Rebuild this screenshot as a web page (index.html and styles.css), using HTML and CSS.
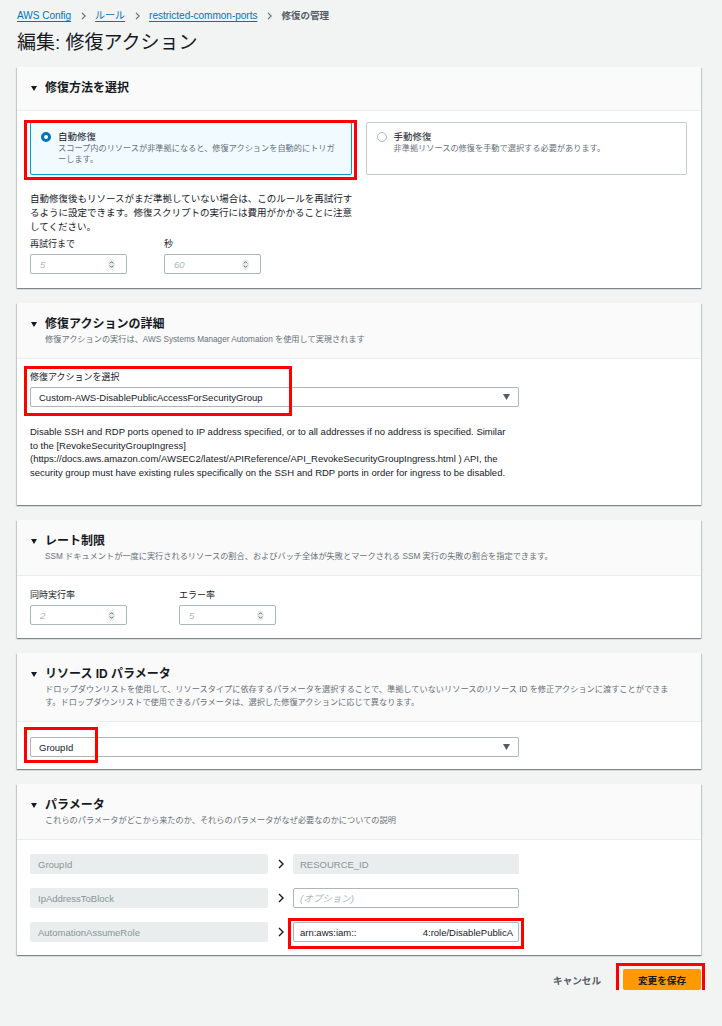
FILE: index.html
```html
<!DOCTYPE html>
<html lang="ja">
<head>
<meta charset="utf-8">
<title>編集: 修復アクション</title>
<link rel="stylesheet" href="styles.css">
</head>
<body>
<div class="page">
  <nav class="crumbs">
    <a class="crumb-link" href="#">AWS Config</a>
    <svg class="crumb-sep" width="5" height="8" viewBox="0 0 5 8"><path d="M1 0.8 L4.2 4 L1 7.2" fill="none" stroke="#687078" stroke-width="1.2"/></svg>
    <a class="crumb-link" href="#">ルール</a>
    <svg class="crumb-sep" width="5" height="8" viewBox="0 0 5 8"><path d="M1 0.8 L4.2 4 L1 7.2" fill="none" stroke="#687078" stroke-width="1.2"/></svg>
    <a class="crumb-link" href="#">restricted-common-ports</a>
    <svg class="crumb-sep" width="5" height="8" viewBox="0 0 5 8"><path d="M1 0.8 L4.2 4 L1 7.2" fill="none" stroke="#687078" stroke-width="1.2"/></svg>
    <span class="crumb-current">修復の管理</span>
  </nav>
  <h1 class="title">編集: 修復アクション</h1>

  <section class="panel panel-first">
    <header class="panel-head panel-head-plain">
      <h2 class="panel-title"><svg class="caret" width="6" height="5" viewBox="0 0 6 5"><polygon points="0,0 6,0 3,5" fill="#16191f"/></svg>修復方法を選択</h2>
    </header>
    <div class="panel-body body-method">
      <div class="choice-grid">
        <div class="choice is-selected">
          <span class="radio radio-on"></span>
          <div class="choice-text">
            <div class="choice-title">自動修復</div>
            <div class="choice-desc">スコープ内のリソースが非準拠になると、修復アクションを自動的にトリガーします。</div>
          </div>
          <span class="hl hl-card"></span>
        </div>
        <div class="choice">
          <span class="radio"></span>
          <div class="choice-text">
            <div class="choice-title">手動修復</div>
            <div class="choice-desc">非準拠リソースの修復を手動で選択する必要があります。</div>
          </div>
        </div>
      </div>
      <p class="note">自動修復後もリソースがまだ準拠していない場合は、このルールを再試行するように設定できます。修復スクリプトの実行には費用がかかることに注意してください。</p>
      <div class="field-row row-retry">
        <div class="field">
          <span class="label">再試行まで</span>
          <div class="num"><span>5</span><svg width="7" height="11" viewBox="0 0 7 11"><ellipse cx="3.5" cy="5.5" rx="3.5" ry="5.5" fill="#eaeded"/><path d="M1.8 4.4 L3.5 2.7 L5.2 4.4 M1.8 6.6 L3.5 8.3 L5.2 6.6" fill="none" stroke="#545b64" stroke-width="0.9"/></svg></div>
        </div>
        <div class="field">
          <span class="label">秒</span>
          <div class="num"><span>60</span><svg width="7" height="11" viewBox="0 0 7 11"><ellipse cx="3.5" cy="5.5" rx="3.5" ry="5.5" fill="#eaeded"/><path d="M1.8 4.4 L3.5 2.7 L5.2 4.4 M1.8 6.6 L3.5 8.3 L5.2 6.6" fill="none" stroke="#545b64" stroke-width="0.9"/></svg></div>
        </div>
      </div>
    </div>
  </section>

  <section class="panel">
    <header class="panel-head">
      <h2 class="panel-title"><svg class="caret" width="6" height="5" viewBox="0 0 6 5"><polygon points="0,0 6,0 3,5" fill="#16191f"/></svg>修復アクションの詳細</h2>
      <p class="panel-sub">修復アクションの実行は、AWS Systems Manager Automation を使用して実現されます</p>
    </header>
    <div class="panel-body body-action">
      <div class="field field-action">
        <span class="label">修復アクションを選択</span>
        <div class="select"><span>Custom-AWS-DisablePublicAccessForSecurityGroup</span><svg width="7" height="6" viewBox="0 0 7 6"><polygon points="0,0 7,0 3.5,6" fill="#545b64"/></svg></div>
        <span class="hl hl-action"></span>
      </div>
      <p class="desc">Disable SSH and RDP ports opened to IP address specified, or to all addresses if no address is specified. Similar<br>to the [RevokeSecurityGroupIngress]<br>(https://docs.aws.amazon.com/AWSEC2/latest/APIReference/API_RevokeSecurityGroupIngress.html ) API, the<br>security group must have existing rules specifically on the SSH and RDP ports in order for ingress to be disabled.</p>
    </div>
  </section>

  <section class="panel">
    <header class="panel-head">
      <h2 class="panel-title"><svg class="caret" width="6" height="5" viewBox="0 0 6 5"><polygon points="0,0 6,0 3,5" fill="#16191f"/></svg>レート制限</h2>
      <p class="panel-sub">SSM ドキュメントが一度に実行されるリソースの割合、およびバッチ全体が失敗とマークされる SSM 実行の失敗の割合を指定できます。</p>
    </header>
    <div class="panel-body body-rate">
      <div class="field-row row-rate">
        <div class="field">
          <span class="label">同時実行率</span>
          <div class="num"><span>2</span><svg width="7" height="11" viewBox="0 0 7 11"><ellipse cx="3.5" cy="5.5" rx="3.5" ry="5.5" fill="#eaeded"/><path d="M1.8 4.4 L3.5 2.7 L5.2 4.4 M1.8 6.6 L3.5 8.3 L5.2 6.6" fill="none" stroke="#545b64" stroke-width="0.9"/></svg></div>
        </div>
        <div class="field">
          <span class="label">エラー率</span>
          <div class="num"><span>5</span><svg width="7" height="11" viewBox="0 0 7 11"><ellipse cx="3.5" cy="5.5" rx="3.5" ry="5.5" fill="#eaeded"/><path d="M1.8 4.4 L3.5 2.7 L5.2 4.4 M1.8 6.6 L3.5 8.3 L5.2 6.6" fill="none" stroke="#545b64" stroke-width="0.9"/></svg></div>
        </div>
      </div>
    </div>
  </section>

  <section class="panel">
    <header class="panel-head">
      <h2 class="panel-title"><svg class="caret" width="6" height="5" viewBox="0 0 6 5"><polygon points="0,0 6,0 3,5" fill="#16191f"/></svg>リソース ID パラメータ</h2>
      <p class="panel-sub">ドロップダウンリストを使用して、リソースタイプに依存するパラメータを選択することで、準拠していないリソースのリソース ID を修正アクションに渡すことができま<br>す。ドロップダウンリストで使用できるパラメータは、選択した修復アクションに応じて異なります。</p>
    </header>
    <div class="panel-body body-resource">
      <div class="select select-resource"><span>GroupId</span><svg width="7" height="6" viewBox="0 0 7 6"><polygon points="0,0 7,0 3.5,6" fill="#545b64"/></svg><span class="hl hl-resource"></span></div>
    </div>
  </section>

  <section class="panel">
    <header class="panel-head">
      <h2 class="panel-title"><svg class="caret" width="6" height="5" viewBox="0 0 6 5"><polygon points="0,0 6,0 3,5" fill="#16191f"/></svg>パラメータ</h2>
      <p class="panel-sub">これらのパラメータがどこから来たのか、それらのパラメータがなぜ必要なのかについての説明</p>
    </header>
    <div class="panel-body body-params">
      <div class="param">
        <div class="param-key">GroupId</div>
        <div class="param-arrow"><svg width="6" height="10" viewBox="0 0 6 10"><path d="M1 1 L5 5 L1 9" fill="none" stroke="#16191f" stroke-width="1.4"/></svg></div>
        <div class="param-val is-disabled">RESOURCE_ID</div>
      </div>
      <div class="param">
        <div class="param-key">IpAddressToBlock</div>
        <div class="param-arrow"><svg width="6" height="10" viewBox="0 0 6 10"><path d="M1 1 L5 5 L1 9" fill="none" stroke="#16191f" stroke-width="1.4"/></svg></div>
        <div class="param-val"><span class="placeholder">(オプション)</span></div>
      </div>
      <div class="param">
        <div class="param-key">AutomationAssumeRole</div>
        <div class="param-arrow"><svg width="6" height="10" viewBox="0 0 6 10"><path d="M1 1 L5 5 L1 9" fill="none" stroke="#16191f" stroke-width="1.4"/></svg></div>
        <div class="param-val param-role"><span>arn:aws:iam::</span><span>4:role/DisablePublicA</span><span class="hl hl-role"></span></div>
      </div>
    </div>
  </section>

  <div class="actions">
    <span class="btn-link">キャンセル</span>
    <span class="btn-primary">変更を保存<span class="hl hl-save"></span></span>
  </div>
</div>
</body>
</html>
```

FILE: styles.css
```css
* { box-sizing: border-box; }

html { background: #f2f3f3; }

body {
  margin: 0;
  font-family: "Liberation Sans", "Noto Sans CJK JP", sans-serif;
  font-size: 9.5px;
  color: #16191f;
}

.page {
  padding: 9px 21px 0 17px;
}

/* breadcrumb */
.crumbs {
  display: flex;
  align-items: center;
  height: 14px;
  font-size: 10px;
  line-height: 14px;
}
.crumb-link {
  color: #0073bb;
  text-decoration: underline;
  text-underline-offset: 2px;
}
.crumb-sep { margin: 0 9px 0 10px; flex: none; }
.crumb-current { color: #545b64; font-size: 9.5px; font-weight: bold; }

.title {
  margin: 8px 0 0;
  font-size: 19px;
  line-height: 24px;
  font-weight: normal;
}

/* panels */
.panel {
  background: #fff;
  margin-top: 15px;
  box-shadow: 0 1px 1px 0 rgba(0, 28, 36, 0.3), 1px 1px 1px 0 rgba(0, 28, 36, 0.15), -1px 1px 1px 0 rgba(0, 28, 36, 0.15);
}
.panel-first { margin-top: 12px; }

.panel-head {
  background: #fafafa;
  border-bottom: 1px solid #eaeded;
  padding: 12px 14px 12px;
}
.panel-head-plain { padding-bottom: 13px; }

.panel-title {
  display: flex;
  align-items: center;
  gap: 8px;
  margin: 0;
  font-size: 12px;
  line-height: 18px;
  font-weight: bold;
}
.caret { flex: none; }

.panel-sub {
  margin: 0 0 0 14px;
  font-size: 8.2px;
  line-height: 13px;
  color: #687078;
}

.panel-body { padding: 0 14px 0 13px; }

/* method */
.body-method { padding-top: 11px; padding-bottom: 14px; }

.choice-grid {
  display: grid;
  grid-template-columns: 1fr 1fr;
  gap: 14px;
}
.choice {
  position: relative;
  display: flex;
  gap: 7px;
  padding: 8px 10px 9px;
  border: 1px solid #c6cccc;
  border-radius: 2px;
}
.choice.is-selected {
  background: #f1faff;
  border-color: #00a1c9;
}
.radio {
  flex: none;
  width: 10px;
  height: 10px;
  margin-top: 1px;
  border-radius: 50%;
  border: 1px solid #aab7b8;
  background: #fff;
}
.radio-on { border: 3px solid #0073bb; }

.choice-title { font-size: 9.5px; line-height: 12px; }
.choice-desc { font-size: 8.2px; line-height: 11px; color: #687078; }

.note {
  margin: 17px 0 0;
  width: 330px;
  line-height: 14px;
}

.field-row {
  display: grid;
  margin-top: 4px;
}
.row-retry { grid-template-columns: 134px 97px; }
.row-rate { grid-template-columns: 149px 97px; }

.label {
  display: block;
  font-size: 9px;
  line-height: 12px;
  margin-bottom: 4px;
}

.num {
  width: 97px;
  height: 20px;
  display: flex;
  align-items: center;
  justify-content: space-between;
  padding: 0 11px 0 9px;
  border: 1px solid #aab7b8;
  border-radius: 2px;
  color: #aab7b8;
  font-style: italic;
}

/* action */
.body-action { padding-top: 12px; padding-bottom: 26px; }
.field-action { position: relative; }

.select {
  position: relative;
  width: 489px;
  height: 20px;
  display: flex;
  align-items: center;
  justify-content: space-between;
  padding: 0 8px;
  border: 1px solid #aab7b8;
  border-radius: 2px;
  font-size: 9.5px;
}

.desc {
  margin: 18px 0 0;
  font-size: 9.5px;
  line-height: 13.5px;
}

/* rate */
.body-rate { padding-top: 13px; padding-bottom: 13px; }
.row-rate { margin-top: 0; }

/* resource */
.body-resource { padding-top: 15px; padding-bottom: 12px; }

/* params */
.body-params {
  display: flex;
  flex-direction: column;
  gap: 14px;
  padding-top: 14px;
  padding-bottom: 13px;
}
.param {
  display: grid;
  grid-template-columns: 238px 25px 226px;
  height: 20px;
}
.param-key {
  display: flex;
  align-items: center;
  padding-left: 8px;
  background: #eaeded;
  color: #879596;
  border-radius: 2px;
}
.param-arrow {
  display: flex;
  align-items: center;
  justify-content: center;
}
.param-val {
  position: relative;
  display: flex;
  align-items: center;
  justify-content: space-between;
  padding: 0 5px 0 6px;
  border: 1px solid #aab7b8;
  border-radius: 2px;
}
.param-val.is-disabled {
  background: #eaeded;
  border-color: #eaeded;
  color: #879596;
}
.placeholder { color: #aab7b8; font-style: italic; }

/* footer actions */
.actions {
  display: flex;
  justify-content: flex-end;
  align-items: center;
  gap: 22px;
  margin-top: 14px;
}
.btn-link {
  color: #545b64;
  font-weight: bold;
  font-size: 9.6px;
}
.btn-primary {
  position: relative;
  display: flex;
  align-items: center;
  height: 21px;
  padding: 0 15px;
  background: #ff9900;
  border-radius: 2px;
  font-weight: bold;
  font-size: 9.6px;
}

/* red annotation frames */
.hl {
  position: absolute;
  border: 3px solid #ff0000;
  pointer-events: none;
}
.hl-card { left: -7px; top: -3px; right: -6px; bottom: -6px; }
.hl-action { left: -6px; top: -5px; width: 268px; height: 50px; }
.hl-resource { left: -7px; top: -11px; width: 74px; height: 36px; }
.hl-role { left: -6px; top: -5px; width: 236px; height: 31px; }
.hl-save { left: -7px; top: -6px; width: 89px; height: 33px; }
```
